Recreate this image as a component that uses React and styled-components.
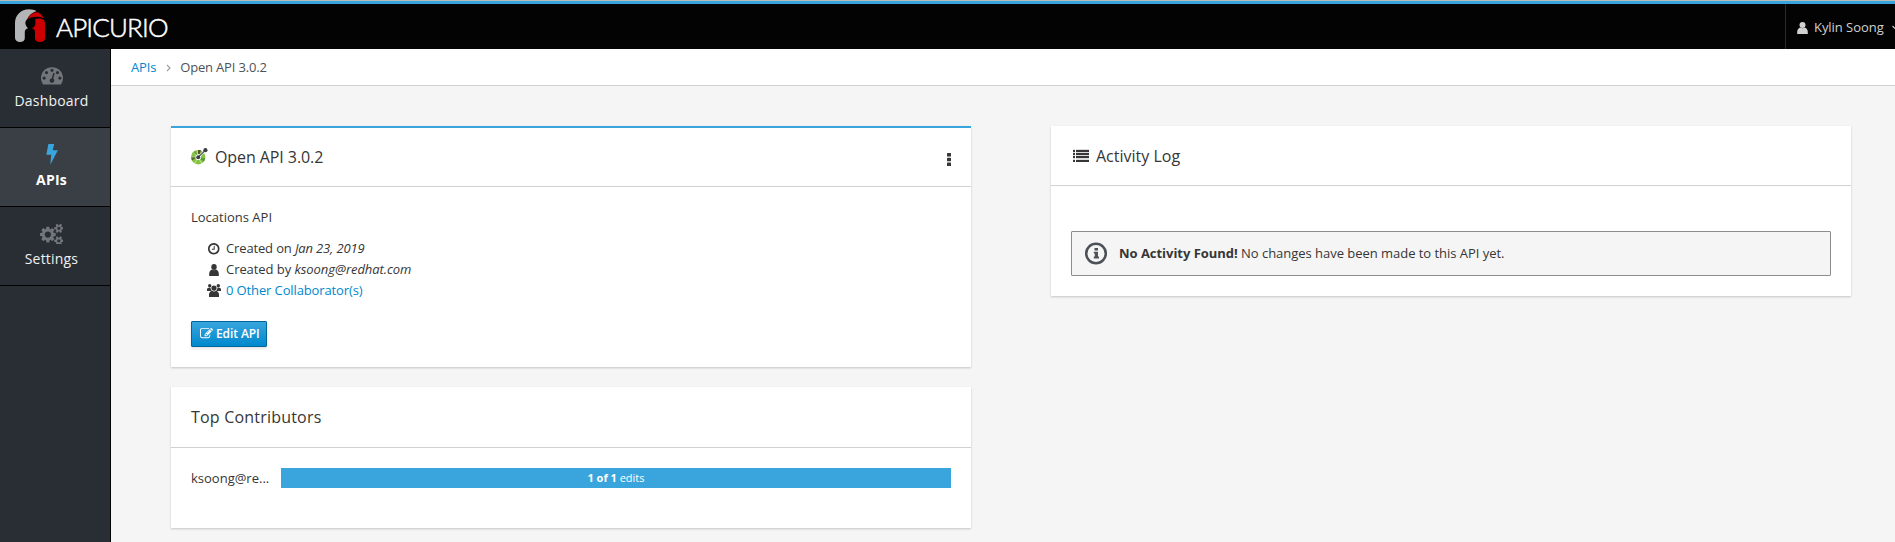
import React from "react";
import styled, { createGlobalStyle, css } from "styled-components";

const GlobalStyle = createGlobalStyle`
  *, *::before, *::after { box-sizing: border-box; }
  body {
    margin: 0;
    overflow: hidden;
    background: #f5f5f5;
    color: #363636;
    font-family: "Open Sans", "Noto Sans", sans-serif;
    font-size: 13px;
    line-height: 21px;
  }
`;

const Page = styled.div`
  display: flex;
  flex-direction: column;
  height: 542px;
  width: 1895px;
  overflow: hidden;
`;

const Masthead = styled.header`
  display: flex;
  justify-content: space-between;
  flex: none;
  height: 49px;
  background: #030303;
  border-top: 1px solid #bcbcbc;
  box-shadow: inset 0 3px 0 #39a5dc;
`;

const Brand = styled.div`
  display: flex;
  align-items: flex-start;
  padding: 8px 0 0 15px;
`;

const BrandName = styled.span`
  margin: 3px 0 0 11px;
  color: #fff;
  font-family: Lato, sans-serif;
  font-size: 26px;
  font-weight: 300;
  line-height: 31px;
  letter-spacing: -0.85px;
  -webkit-text-stroke: 0.5px #fff;
`;

const UserMenu = styled.div`
  display: flex;
  align-items: center;
  width: 110px;
  margin-top: 3px;
  padding-left: 11px;
  padding-top: 2px;
  border-left: 1px solid #2b2b2b;
  color: #d1d1d1;
  white-space: nowrap;
  overflow: hidden;
  letter-spacing: -0.05px;

  svg { flex: none; }
  span { margin: 0 8px 0 6px; }
`;

const Main = styled.div`
  display: flex;
  flex: 1;
  min-height: 0;
`;

const Sidebar = styled.nav`
  flex: none;
  width: 111px;
  background: #292e34;
  border-right: 1px solid #030303;
`;

const NavItem = styled.a`
  display: flex;
  flex-direction: column;
  align-items: center;
  height: 79px;
  padding: 15px 7px 0 0;
  border-bottom: 1px solid #030303;
  color: #f1f1f1;
  font-size: 14px;
  line-height: 22px;
  letter-spacing: 0.2px;

  svg { color: #72767b; margin-bottom: 4px; }

  ${(p) =>
    p.$active &&
    css`
      background: #393f44;
      color: #fff;
      font-weight: 700;
      svg { color: #39a5dc; }
    `}
`;

const Content = styled.main`
  flex: 1;
  min-width: 0;
`;

const Breadcrumb = styled.div`
  display: flex;
  align-items: center;
  height: 37px;
  padding: 1px 20px 0;
  background: #fff;
  border-bottom: 1px solid #d1d1d1;
  color: #4d5258;
  letter-spacing: -0.17px;

  svg { margin: 1px 9px 0 10px; }
`;

const Link = styled.a`
  color: #0088ce;
`;

const Columns = styled.div`
  display: grid;
  grid-template-columns: 800px 800px;
  column-gap: 80px;
  align-items: start;
  padding: 40px 60px 0;
`;

const Column = styled.div`
  display: flex;
  flex-direction: column;
  gap: 20px;
`;

const Card = styled.section`
  background: #fff;
  border-top: ${(p) => (p.$accent ? "2px solid #39a5dc" : "0")};
  box-shadow: 0 1px 2px rgba(3, 3, 3, 0.2);
`;

const CardHeader = styled.div`
  display: flex;
  align-items: center;
  height: ${(p) => p.$height}px;
  padding: 0 20px ${(p) => p.$lift || 0}px ${(p) => p.$inset || 20}px;
  border-bottom: 1px solid #d1d1d1;
`;

const CardTitle = styled.h2`
  flex: 1;
  margin: 0;
  padding-left: ${(p) => p.$indent || 0}px;
  font-size: 16px;
  font-weight: 400;
  line-height: 22px;
  letter-spacing: ${(p) => p.$tracking || 0}px;
`;

const CardBody = styled.div`
  padding: ${(p) => p.$top || 20}px 20px ${(p) => p.$bottom || 20}px;
`;

const Description = styled.p`
  margin: 0 0 10px;
`;

const MetaRow = styled.div`
  display: grid;
  grid-template-columns: 16px 1fr;
  column-gap: 4px;
  align-items: center;
  justify-items: center;
  padding-left: 15px;
  height: 21px;
  letter-spacing: ${(p) => p.$tracking || 0}px;

  > span, > a { justify-self: start; }
`;

const EditButton = styled.button`
  display: flex;
  align-items: center;
  width: 76px;
  height: 26px;
  margin-top: 20px;
  padding: 0 0 0 8px;
  border: 1px solid #00659c;
  border-radius: 1px;
  background: linear-gradient(#39a5dc, #0088ce);
  box-shadow: 0 2px 3px rgba(3, 3, 3, 0.1);
  color: #fff;
  font: 600 12px/20px "Open Sans", sans-serif;
  letter-spacing: -0.1px;
  white-space: nowrap;

  svg { flex: none; margin: 0 3px 2px 0; }
`;

const ContributorRow = styled.div`
  display: flex;
  align-items: center;
  height: 20px;
`;

const ContributorName = styled.span`
  width: 90px;
  flex: none;
`;

const Progress = styled.div`
  flex: 1;
  height: 20px;
  background: #39a5dc;
  color: #fff;
  font-size: 11px;
  line-height: 20px;
  text-align: center;
`;

const Alert = styled.div`
  display: flex;
  align-items: center;
  height: 45px;
  padding-left: 13px;
  border: 1px solid #8b8d8f;
  border-radius: 1px;
  background: #f5f5f5;
  letter-spacing: -0.03px;

  svg { margin-right: 12px; }
`;

const FaIcon = ({ d, size, box = 1792 }) => (
  <svg width={(size * box) / 1792} height={size} viewBox={`0 0 ${box} 1792`} fill="currentColor">
    <path d={d} />
  </svg>
);

const smallCog =
  "v140q0 16-149 31-12 27-30 52 51 113 51 138 0 4-4 7-122 71-124 71-8 0-46-47t-52-68q-20 2-30 2t-30-2q-14 21-52 68t-46 47q-2 0-124-71-4-3-4-7 0-25 51-138-18-25-30-52-149-15-149-31v-140q0-16 149-31 13-29 30-52-51-113-51-138 0-4 4-7 4-2 35-20t59-34 30-16q8 0 46 46.5t52 67.5q20-2 30-2t30 2q51-71 92-112l6-2q4 0 124 70 4 3 4 7 0 25-51 138 17 23 30 52 149 15 149 31z";

const icons = {
  dashboard:
    "M384 1152q0-53-37.5-90.5t-90.5-37.5-90.5 37.5-37.5 90.5 37.5 90.5 90.5 37.5 90.5-37.5 37.5-90.5zm192-448q0-53-37.5-90.5t-90.5-37.5-90.5 37.5-37.5 90.5 37.5 90.5 90.5 37.5 90.5-37.5 37.5-90.5zm428 481l101-382q6-26-7.5-48.5t-38.5-29.5-48 6.5-30 39.5l-101 382q-60 5-107 43.5t-63 98.5q-20 77 20 146t117 89 146-20 89-117q16-60-6-117t-72-91zm660-33q0-53-37.5-90.5t-90.5-37.5-90.5 37.5-37.5 90.5 37.5 90.5 90.5 37.5 90.5-37.5 37.5-90.5zm-640-640q0-53-37.5-90.5t-90.5-37.5-90.5 37.5-37.5 90.5 37.5 90.5 90.5 37.5 90.5-37.5 37.5-90.5zm448 192q0-53-37.5-90.5t-90.5-37.5-90.5 37.5-37.5 90.5 37.5 90.5 90.5 37.5 90.5-37.5 37.5-90.5zm320 448q0 261-141 483-19 29-54 29h-1402q-35 0-54-29-141-221-141-483 0-182 71-348t191-286 286-191 348-71 348 71 286 191 191 286 71 348z",
  cogs:
    "M896 1024q0-106-75-181t-181-75-181 75-75 181 75 181 181 75 181-75 75-181zm768 512q0-52-38-90t-90-38-90 38-38 90q0 53 37.5 90.5t90.5 37.5 90.5-37.5 37.5-90.5zm0-1024q0-52-38-90t-90-38-90 38-38 90q0 53 37.5 90.5t90.5 37.5 90.5-37.5 37.5-90.5zm-384 421v185q0 10-7 19.5t-16 10.5l-155 24q-11 35-32 76 34 48 90 115 7 11 7 20 0 12-7 19-23 30-82.5 89.5t-78.5 59.5q-11 0-21-7l-115-90q-37 19-77 31-11 108-23 155-7 24-30 24h-186q-11 0-20-7.5t-10-17.5l-23-153q-34-10-75-31l-118 89q-7 7-20 7-11 0-21-8-144-133-144-160 0-9 7-19 10-14 41-53t47-61q-23-44-35-82l-152-24q-10-1-17-9.5t-7-19.5v-185q0-10 7-19.5t16-10.5l155-24q11-35 32-76-34-48-90-115-7-11-7-20 0-12 7-20 22-30 82-89t79-59q11 0 21 7l115 90q34-18 77-32 11-108 23-154 7-24 30-24h186q11 0 20 7.5t10 17.5l23 153q34 10 75 31l118-89q8-7 20-7 11 0 21 8 144 133 144 160 0 8-7 19-12 16-42 54t-45 60q23 48 34 82l152 23q10 2 17 10.5t7 19.5z" +
    "M1920 1466" + smallCog + "M1920 442" + smallCog,
  clock:
    "M1024 544v448q0 14-9 23t-23 9h-320q-14 0-23-9t-9-23v-64q0-14 9-23t23-9h224v-352q0-14 9-23t23-9h64q14 0 23 9t9 23zm416 352q0-148-73-273t-198-198-273-73-273 73-198 198-73 273 73 273 198 198 273 73 273-73 198-198 73-273zm224 0q0 209-103 385.5t-279.5 279.5-385.5 103-385.5-103-279.5-279.5-103-385.5 103-385.5 279.5-279.5 385.5-103 385.5 103 279.5 279.5 103 385.5z",
  edit:
    "M888 1184l116-116-152-152-116 116v56h96v96h56zm440-720q-16-16-33 1l-350 350q-17 17-1 33t33-1l350-350q17-17 1-33zm80 594v190q0 119-84.5 203.5t-203.5 84.5h-832q-119 0-203.5-84.5t-84.5-203.5v-832q0-119 84.5-203.5t203.5-84.5h832q63 0 117 25 15 7 18 23 3 17-9 29l-49 49q-14 14-32 8-23-6-45-6h-832q-66 0-113 47t-47 113v832q0 66 47 113t113 47h832q66 0 113-47t47-113v-126q0-13 9-22l64-64q15-15 35-7t20 29zm-96-738l288 288-672 672h-288v-288zm444 132l-92 92-288-288 92-92q28-28 68-28t68 28l152 152q28 28 28 68t-28 68z",
};

const BrandMark = () => (
  <svg width="30" height="34" viewBox="0 0 30 34">
    <path
      d="M0 14C0 6 6 0.2 14 0.2C17 0.2 19.5 1 21.5 2C17 3.5 13.5 6.5 12 10.5C10.3 11.5 10 14 10.8 16C11.2 17.5 12.5 19 13.2 19.3C10.8 20 9.8 21.2 9.8 23V29C9.8 31.5 8 33 5 33S0 31.2 0 29Z"
      fill="#b3b5b7"
    />
    <path d="M12.7 9.8C14.5 5.5 19 2.8 23 3.2C26 4.6 27.8 6.8 28.3 9.2C23 6.8 17.5 7.8 12.7 9.8Z" fill="#cc0000" />
    <path
      d="M20 10.2C23.5 8.9 27 9.5 29 11C29.8 12.5 30 14 30 16V29C30 31.5 28 33 25 33S20 31.5 20 29V23C20 20.8 18.8 19.8 16.8 19.3C19 18.5 20.4 16.7 20.4 14.5C20.4 12.5 20.6 11.5 20 10.2Z"
      fill="#cc0000"
    />
  </svg>
);

const UserIcon = ({ size = 12, width = 11 }) => (
  <svg width={width} height={size} viewBox="0 0 11 12" preserveAspectRatio="none" fill="currentColor">
    <circle cx="5.5" cy="3" r="3" />
    <path d="M0.2 12V10C0.2 7.4 1.6 6 3.5 5.6C4.8 6.6 6.2 6.6 7.5 5.6C9.4 6 10.8 7.4 10.8 10V12Z" />
  </svg>
);

const UsersIcon = () => (
  <svg width="14" height="13" viewBox="0 0 14 13" fill="currentColor">
    <circle cx="2.7" cy="1.7" r="1.7" />
    <circle cx="11.3" cy="1.7" r="1.7" />
    <path d="M0 7V5.6C0 4.4 .8 3.8 1.8 3.7H3.6C3.6 5 4 6.1 4.9 7ZM14 7V5.6C14 4.4 13.2 3.8 12.2 3.7H10.4C10.4 5 10 6.1 9.1 7Z" />
    <circle cx="7" cy="4.1" r="2.6" />
    <path d="M2 13V10.6C2 8.6 3.2 7.5 5 6.8C6.2 7.6 7.8 7.6 9 6.8C10.8 7.5 12 8.6 12 10.6V13Z" />
  </svg>
);

const BoltIcon = () => (
  <svg width="12" height="22" viewBox="0 0 12 22" fill="currentColor">
    <path d="M2.4 1H8.2L6.7 7.2H11.9L4.3 21.8L5.2 11.8H0.3Z" />
  </svg>
);

const ListIcon = () => (
  <svg width="16" height="13" viewBox="0 0 16 13" fill="currentColor" shapeRendering="crispEdges">
    <path d="M0 0H2V13H0ZM3 0H16V13H3Z" fill="#dcdcdc" />
    {[1, 4, 7, 11].map((y) => (
      <React.Fragment key={y}>
        <rect x="0" y={y} width="2" height="2" />
        <rect x="3" y={y} width="13" height="2" />
      </React.Fragment>
    ))}
  </svg>
);

const KebabIcon = styled(({ className }) => (
  <svg className={className} width="4" height="13" viewBox="0 0 4 13" fill="currentColor">
    <rect width="4" height="3.4" rx=".5" />
    <rect y="4.8" width="4" height="3.4" rx=".5" />
    <rect y="9.6" width="4" height="3.4" rx=".5" />
  </svg>
))`
  margin-top: 6px;
`;

const InfoIcon = () => (
  <svg width="22" height="23" viewBox="0 0 22 23" fill="#4d5258">
    <circle cx="11" cy="11.5" r="9.8" fill="none" stroke="#4d5258" strokeWidth="2.6" />
    <path d="M9.5 6H13V8.5H9.5ZM8.8 9.8H13V14.6H14V16.4H8.8V14.6H9.8V11.6H8.8Z" />
  </svg>
);

const OpenApiIcon = () => (
  <svg width="17" height="17" viewBox="0 0 17 17">
    <circle cx="7.2" cy="9.2" r="4.9" fill="none" stroke="#85c441" strokeWidth="4.6" />
    <path d="M0 8.7H4.5L5 10L1 12.5Z" fill="#4f6a2b" />
    <path d="M1.2 5L4.6 7.3L6 6L4.2 2.8Z" fill="#6ba43a" />
    <path d="M6.7 2H10L8.6 6H6.9Z" fill="#5b4a35" />
    <path d="M10 10H14.3L13 13.5L9.5 11.5Z" fill="#5a9a3c" />
    <path d="M0 9H4M5.6 12.4L3.4 15.8M8.8 12.2L11 15.6M2 4.5L5 7.2M6.5 2V6" stroke="#fff" strokeWidth=".5" />
    <circle cx="7.2" cy="9.2" r="2.7" fill="#fff" />
    <path d="M7.2 9.2L14.6 2.2" stroke="#fff" strokeWidth="2.2" />
    <path d="M7.2 9.2L14.6 2.2" stroke="#3b3f42" strokeWidth="1.1" />
    <circle cx="7.2" cy="9.2" r="2" fill="#3b3f42" />
    <circle cx="14.4" cy="2.2" r="2.1" fill="#3b3f42" />
  </svg>
);

export default function App() {
  return (
    <Page>
      <GlobalStyle />
      <Masthead>
        <Brand>
          <BrandMark />
          <BrandName>APICURIO</BrandName>
        </Brand>
        <UserMenu>
          <UserIcon />
          <span>Kylin Soong</span>
          <svg width="8" height="6" viewBox="0 0 8 6" fill="none" stroke="currentColor" strokeWidth="1.2">
            <path d="M0.5 1L4 4.5L7.5 1" />
          </svg>
        </UserMenu>
      </Masthead>
      <Main>
        <Sidebar>
          <NavItem>
            <FaIcon d={icons.dashboard} size={22} />
            Dashboard
          </NavItem>
          <NavItem $active>
            <BoltIcon />
            APIs
          </NavItem>
          <NavItem>
            <FaIcon d={icons.cogs} size={22} box={1920} />
            Settings
          </NavItem>
        </Sidebar>
        <Content>
          <Breadcrumb>
            <Link>APIs</Link>
            <svg width="5" height="8" viewBox="0 0 5 8" fill="none" stroke="#9c9c9c" strokeWidth="1.1">
              <path d="M1 1L4 4L1 7" />
            </svg>
            <span>Open API 3.0.2</span>
          </Breadcrumb>
          <Columns>
            <Column>
              <Card $accent>
                <CardHeader $height={59} $lift={1}>
                  <OpenApiIcon />
                  <CardTitle $indent={7} $tracking={-0.08}>Open API 3.0.2</CardTitle>
                  <KebabIcon />
                </CardHeader>
                <CardBody>
                  <Description>Locations API</Description>
                  <MetaRow $tracking={-0.14}>
                    <FaIcon d={icons.clock} size={13.5} />
                    <span>
                      Created on <em>Jan 23, 2019</em>
                    </span>
                  </MetaRow>
                  <MetaRow $tracking={-0.06}>
                    <UserIcon size={12} width={10} />
                    <span>
                      Created by <em>ksoong@redhat.com</em>
                    </span>
                  </MetaRow>
                  <MetaRow $tracking={-0.12}>
                    <UsersIcon />
                    <Link>0 Other Collaborator(s)</Link>
                  </MetaRow>
                  <EditButton>
                    <FaIcon d={icons.edit} size={13} />
                    Edit API
                  </EditButton>
                </CardBody>
              </Card>
              <Card>
                <CardHeader $height={61}>
                  <CardTitle $tracking={0.2}>Top Contributors</CardTitle>
                </CardHeader>
                <CardBody $bottom={40}>
                  <ContributorRow>
                    <ContributorName>ksoong@re...</ContributorName>
                    <Progress>
                      <strong>1 of 1</strong> edits
                    </Progress>
                  </ContributorRow>
                </CardBody>
              </Card>
            </Column>
            <Card>
              <CardHeader $height={60} $inset={22}>
                <ListIcon />
                <CardTitle $indent={7}>Activity Log</CardTitle>
              </CardHeader>
              <CardBody $top={45}>
                <Alert>
                  <InfoIcon />
                  <span>
                    <strong>No Activity Found!</strong> No changes have been made to this API yet.
                  </span>
                </Alert>
              </CardBody>
            </Card>
          </Columns>
        </Content>
      </Main>
    </Page>
  );
}
